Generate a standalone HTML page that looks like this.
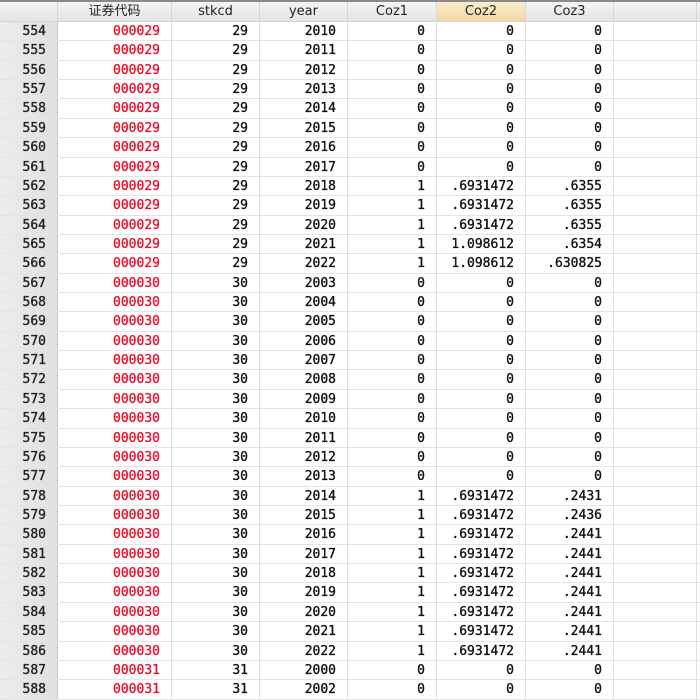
<!DOCTYPE html>
<html><head><meta charset="utf-8"><style>
*{margin:0;padding:0;box-sizing:border-box}
body{width:700px;height:700px;overflow:hidden;background:#fff;font-family:"DejaVu Sans Mono","Liberation Mono","Noto Sans CJK SC",monospace;font-size:13px;color:#111}
.top{height:2px;background:#8a8a8a}
.hd{height:20px;display:flex;background:linear-gradient(#f4f4f4,#e4e4e4);border-bottom:1px solid #d4d4d4}
.hd div{border-right:1px solid #d6d6d6;text-align:center;line-height:20px;font-family:"DejaVu Sans","Noto Sans CJK SC",sans-serif;font-size:13px;color:#222}
.hd .sel{background:linear-gradient(#fbeccb,#f1d9a4)}
.r{height:19.37px;display:flex;border-bottom:1px solid #e4e4e4}
.r div{border-right:1px solid #dedede;text-align:right;line-height:19px;padding-right:11px;-webkit-text-stroke:0.35px}
.r div:first-child{background:linear-gradient(90deg,#ececec,#e0e0e0);color:#222;border-right:1px solid #c8c8c8}
.r div:nth-child(2){color:#e8112d}
.c0{width:58px}.c1{width:114px}.c2{width:88px}.c3{width:88px}.c4{width:89px}.c5{width:89px}.c6{width:88px}.c7{width:83px}
.r div.c7{padding:0}
</style></head><body>
<div class="top"></div>
<div class="hd"><div class="c0"></div><div class="c1">证券代码</div><div class="c2">stkcd</div><div class="c3">year</div><div class="c4">Coz1</div><div class="c5 sel">Coz2</div><div class="c6">Coz3</div><div class="c7"></div></div>
<div class="r"><div class="c0">554</div><div class="c1">000029</div><div class="c2">29</div><div class="c3">2010</div><div class="c4">0</div><div class="c5">0</div><div class="c6">0</div><div class="c7"></div></div>
<div class="r"><div class="c0">555</div><div class="c1">000029</div><div class="c2">29</div><div class="c3">2011</div><div class="c4">0</div><div class="c5">0</div><div class="c6">0</div><div class="c7"></div></div>
<div class="r"><div class="c0">556</div><div class="c1">000029</div><div class="c2">29</div><div class="c3">2012</div><div class="c4">0</div><div class="c5">0</div><div class="c6">0</div><div class="c7"></div></div>
<div class="r"><div class="c0">557</div><div class="c1">000029</div><div class="c2">29</div><div class="c3">2013</div><div class="c4">0</div><div class="c5">0</div><div class="c6">0</div><div class="c7"></div></div>
<div class="r"><div class="c0">558</div><div class="c1">000029</div><div class="c2">29</div><div class="c3">2014</div><div class="c4">0</div><div class="c5">0</div><div class="c6">0</div><div class="c7"></div></div>
<div class="r"><div class="c0">559</div><div class="c1">000029</div><div class="c2">29</div><div class="c3">2015</div><div class="c4">0</div><div class="c5">0</div><div class="c6">0</div><div class="c7"></div></div>
<div class="r"><div class="c0">560</div><div class="c1">000029</div><div class="c2">29</div><div class="c3">2016</div><div class="c4">0</div><div class="c5">0</div><div class="c6">0</div><div class="c7"></div></div>
<div class="r"><div class="c0">561</div><div class="c1">000029</div><div class="c2">29</div><div class="c3">2017</div><div class="c4">0</div><div class="c5">0</div><div class="c6">0</div><div class="c7"></div></div>
<div class="r"><div class="c0">562</div><div class="c1">000029</div><div class="c2">29</div><div class="c3">2018</div><div class="c4">1</div><div class="c5">.6931472</div><div class="c6">.6355</div><div class="c7"></div></div>
<div class="r"><div class="c0">563</div><div class="c1">000029</div><div class="c2">29</div><div class="c3">2019</div><div class="c4">1</div><div class="c5">.6931472</div><div class="c6">.6355</div><div class="c7"></div></div>
<div class="r"><div class="c0">564</div><div class="c1">000029</div><div class="c2">29</div><div class="c3">2020</div><div class="c4">1</div><div class="c5">.6931472</div><div class="c6">.6355</div><div class="c7"></div></div>
<div class="r"><div class="c0">565</div><div class="c1">000029</div><div class="c2">29</div><div class="c3">2021</div><div class="c4">1</div><div class="c5">1.098612</div><div class="c6">.6354</div><div class="c7"></div></div>
<div class="r"><div class="c0">566</div><div class="c1">000029</div><div class="c2">29</div><div class="c3">2022</div><div class="c4">1</div><div class="c5">1.098612</div><div class="c6">.630825</div><div class="c7"></div></div>
<div class="r"><div class="c0">567</div><div class="c1">000030</div><div class="c2">30</div><div class="c3">2003</div><div class="c4">0</div><div class="c5">0</div><div class="c6">0</div><div class="c7"></div></div>
<div class="r"><div class="c0">568</div><div class="c1">000030</div><div class="c2">30</div><div class="c3">2004</div><div class="c4">0</div><div class="c5">0</div><div class="c6">0</div><div class="c7"></div></div>
<div class="r"><div class="c0">569</div><div class="c1">000030</div><div class="c2">30</div><div class="c3">2005</div><div class="c4">0</div><div class="c5">0</div><div class="c6">0</div><div class="c7"></div></div>
<div class="r"><div class="c0">570</div><div class="c1">000030</div><div class="c2">30</div><div class="c3">2006</div><div class="c4">0</div><div class="c5">0</div><div class="c6">0</div><div class="c7"></div></div>
<div class="r"><div class="c0">571</div><div class="c1">000030</div><div class="c2">30</div><div class="c3">2007</div><div class="c4">0</div><div class="c5">0</div><div class="c6">0</div><div class="c7"></div></div>
<div class="r"><div class="c0">572</div><div class="c1">000030</div><div class="c2">30</div><div class="c3">2008</div><div class="c4">0</div><div class="c5">0</div><div class="c6">0</div><div class="c7"></div></div>
<div class="r"><div class="c0">573</div><div class="c1">000030</div><div class="c2">30</div><div class="c3">2009</div><div class="c4">0</div><div class="c5">0</div><div class="c6">0</div><div class="c7"></div></div>
<div class="r"><div class="c0">574</div><div class="c1">000030</div><div class="c2">30</div><div class="c3">2010</div><div class="c4">0</div><div class="c5">0</div><div class="c6">0</div><div class="c7"></div></div>
<div class="r"><div class="c0">575</div><div class="c1">000030</div><div class="c2">30</div><div class="c3">2011</div><div class="c4">0</div><div class="c5">0</div><div class="c6">0</div><div class="c7"></div></div>
<div class="r"><div class="c0">576</div><div class="c1">000030</div><div class="c2">30</div><div class="c3">2012</div><div class="c4">0</div><div class="c5">0</div><div class="c6">0</div><div class="c7"></div></div>
<div class="r"><div class="c0">577</div><div class="c1">000030</div><div class="c2">30</div><div class="c3">2013</div><div class="c4">0</div><div class="c5">0</div><div class="c6">0</div><div class="c7"></div></div>
<div class="r"><div class="c0">578</div><div class="c1">000030</div><div class="c2">30</div><div class="c3">2014</div><div class="c4">1</div><div class="c5">.6931472</div><div class="c6">.2431</div><div class="c7"></div></div>
<div class="r"><div class="c0">579</div><div class="c1">000030</div><div class="c2">30</div><div class="c3">2015</div><div class="c4">1</div><div class="c5">.6931472</div><div class="c6">.2436</div><div class="c7"></div></div>
<div class="r"><div class="c0">580</div><div class="c1">000030</div><div class="c2">30</div><div class="c3">2016</div><div class="c4">1</div><div class="c5">.6931472</div><div class="c6">.2441</div><div class="c7"></div></div>
<div class="r"><div class="c0">581</div><div class="c1">000030</div><div class="c2">30</div><div class="c3">2017</div><div class="c4">1</div><div class="c5">.6931472</div><div class="c6">.2441</div><div class="c7"></div></div>
<div class="r"><div class="c0">582</div><div class="c1">000030</div><div class="c2">30</div><div class="c3">2018</div><div class="c4">1</div><div class="c5">.6931472</div><div class="c6">.2441</div><div class="c7"></div></div>
<div class="r"><div class="c0">583</div><div class="c1">000030</div><div class="c2">30</div><div class="c3">2019</div><div class="c4">1</div><div class="c5">.6931472</div><div class="c6">.2441</div><div class="c7"></div></div>
<div class="r"><div class="c0">584</div><div class="c1">000030</div><div class="c2">30</div><div class="c3">2020</div><div class="c4">1</div><div class="c5">.6931472</div><div class="c6">.2441</div><div class="c7"></div></div>
<div class="r"><div class="c0">585</div><div class="c1">000030</div><div class="c2">30</div><div class="c3">2021</div><div class="c4">1</div><div class="c5">.6931472</div><div class="c6">.2441</div><div class="c7"></div></div>
<div class="r"><div class="c0">586</div><div class="c1">000030</div><div class="c2">30</div><div class="c3">2022</div><div class="c4">1</div><div class="c5">.6931472</div><div class="c6">.2441</div><div class="c7"></div></div>
<div class="r"><div class="c0">587</div><div class="c1">000031</div><div class="c2">31</div><div class="c3">2000</div><div class="c4">0</div><div class="c5">0</div><div class="c6">0</div><div class="c7"></div></div>
<div class="r"><div class="c0">588</div><div class="c1">000031</div><div class="c2">31</div><div class="c3">2002</div><div class="c4">0</div><div class="c5">0</div><div class="c6">0</div><div class="c7"></div></div>
</body></html>
